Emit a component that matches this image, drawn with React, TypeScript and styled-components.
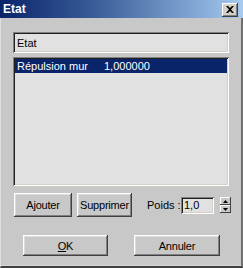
import React from "react";
import styled, { createGlobalStyle } from "styled-components";

const Global = createGlobalStyle`
  html, body { margin: 0; padding: 0; background: #c8c8c8; }
  body { font-family: "Liberation Sans", Arial, sans-serif; font-size: 11px; }
`;

const Window = styled.div`
  width: 243px;
  height: 268px;
  display: flex;
  flex-direction: column;
  background: #c8c8c8;
  overflow: hidden;
`;

const TitleBar = styled.div`
  height: 18px;
  flex: none;
  display: flex;
  align-items: center;
  justify-content: space-between;
  padding: 0 5px 0 3px;
  background: linear-gradient(to right, #0a246a 0%, #3a5f9a 40%, #a6caf0 100%);
`;

const Title = styled.span`
  color: #fff;
  font-weight: bold;
  font-size: 12px;
  line-height: 18px;
`;

const CloseBtn = styled.div`
  width: 16px;
  height: 14px;
  background: #d4d0c8;
  box-shadow: inset -1px -1px #404040, inset 1px 1px #ffffff, inset -2px -2px #808080;
  display: flex;
  align-items: center;
  justify-content: center;
  margin-top: 1px;
`;

const Body = styled.div`
  flex: 1;
  display: flex;
  flex-direction: column;
  padding: 14px 8px 0 12px;
  border-left: 1px solid #dedede;
  border-right: 2px solid #707070;
  border-bottom: 2px solid #404040;
  box-shadow: inset 0 -1px #d8d8d8;
`;

const Field = styled.div`
  height: 21px;
  width: 216px;
  box-sizing: border-box;
  background: #e1e1e1;
  box-shadow: inset 1px 1px #808080, inset -1px -1px #ffffff, inset 2px 2px #202020, inset -2px -2px #d4d0c8;
  padding: 0 4px;
  display: flex;
  align-items: center;
  color: #000;
`;

const ListBox = styled.div`
  margin-top: 4px;
  height: 129px;
  width: 216px;
  box-sizing: border-box;
  background: #e1e1e1;
  box-shadow: inset 1px 1px #808080, inset -1px -1px #ffffff, inset 2px 2px #202020, inset -2px -2px #d4d0c8;
  padding: 2px;
`;

const ListRow = styled.div<{ $selected?: boolean }>`
  height: 14px;
  display: flex;
  align-items: center;
  padding-left: 2px;
  background: ${(p) => (p.$selected ? "#0a246a" : "transparent")};
  color: ${(p) => (p.$selected ? "#ffffff" : "#000")};
`;

const Cell = styled.span<{ $w: number }>`
  width: ${(p) => p.$w}px;
  white-space: nowrap;
`;

const ToolRow = styled.div`
  margin-top: 7px;
  height: 24px;
  display: flex;
  align-items: center;
  padding-left: 1px;
`;

const Button = styled.button<{ $w: number; $h: number }>`
  flex: none;
  width: ${(p) => p.$w}px;
  height: ${(p) => p.$h}px;
  border: none;
  padding: 0;
  margin: 0;
  background: #c8c8c8;
  box-shadow: inset -1px -1px #404040, inset 1px 1px #ffffff, inset -2px -2px #808080, inset 2px 2px #dcdcdc;
  font-family: "Liberation Sans", Arial, sans-serif;
  font-size: 11px;
  letter-spacing: -0.2px;
  color: #000;
  display: flex;
  align-items: center;
  justify-content: center;
`;

const Label = styled.span`
  flex: none;
  white-space: nowrap;
  margin-left: 15px;
  width: 34px;
  color: #000;
`;

const SpinField = styled.div`
  flex: none;
  width: 33px;
  height: 17px;
  box-sizing: border-box;
  background: #e1e1e1;
  box-shadow: inset 1px 1px #808080, inset -1px -1px #ffffff, inset 2px 2px #202020, inset -2px -2px #d4d0c8;
  padding: 0 3px;
  display: flex;
  align-items: center;
`;

const Spinner = styled.div`
  flex: none;
  margin-left: 6px;
  width: 11px;
  height: 16px;
  display: flex;
  flex-direction: column;
`;

const SpinHalf = styled.div`
  flex: 1;
  background: #c8c8c8;
  box-shadow: inset -1px -1px #404040, inset 1px 1px #ffffff;
  display: flex;
  align-items: center;
  justify-content: center;
`;

const BottomRow = styled.div`
  margin-top: 18px;
  display: flex;
  padding-left: 10px;
  gap: 26px;
`;

const U = styled.span`
  text-decoration: underline;
`;

export default function App() {
  return (
    <>
      <Global />
      <Window>
        <TitleBar>
          <Title>Etat</Title>
          <CloseBtn>
            <svg width="8" height="7" viewBox="0 0 8 7">
              <path d="M0 0h2l2 2 2-2h2L5 3.5 8 7H6L4 5 2 7H0l3-3.5z" fill="#000" />
            </svg>
          </CloseBtn>
        </TitleBar>
        <Body>
          <Field>Etat</Field>
          <ListBox>
            <ListRow $selected>
              <Cell $w={87}>Répulsion mur</Cell>
              <Cell $w={60}>1,000000</Cell>
            </ListRow>
          </ListBox>
          <ToolRow>
            <Button $w={58} $h={24}>Ajouter</Button>
            <Button $w={55} $h={24} style={{ marginLeft: 5 }}>Supprimer</Button>
            <Label>Poids :</Label>
            <SpinField>1,0</SpinField>
            <Spinner>
              <SpinHalf>
                <svg width="5" height="3" viewBox="0 0 5 3"><path d="M2.5 0L5 3H0z" fill="#000" /></svg>
              </SpinHalf>
              <SpinHalf>
                <svg width="5" height="3" viewBox="0 0 5 3"><path d="M0 0h5L2.5 3z" fill="#000" /></svg>
              </SpinHalf>
            </Spinner>
          </ToolRow>
          <BottomRow>
            <Button $w={85} $h={21}><U>O</U>K</Button>
            <Button $w={86} $h={21}>Annuler</Button>
          </BottomRow>
        </Body>
      </Window>
    </>
  );
}
